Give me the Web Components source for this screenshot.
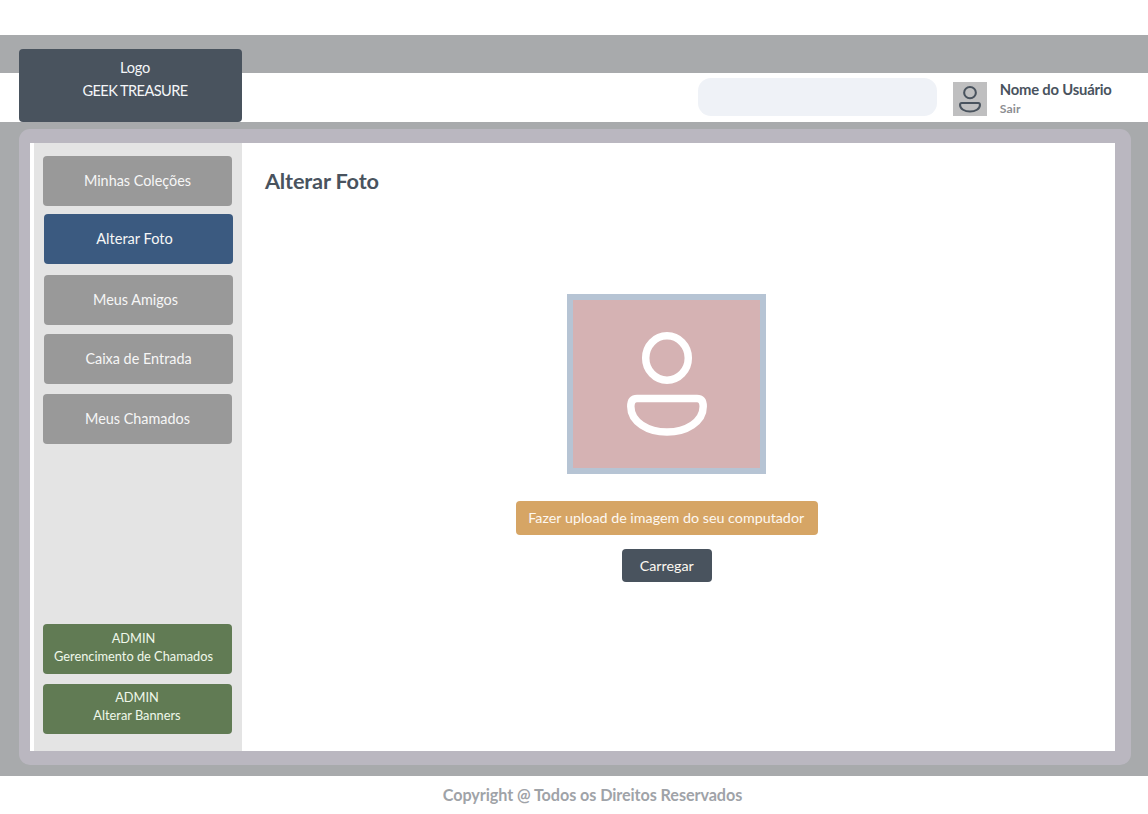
<!DOCTYPE html>
<html lang="pt-BR">
<head>
<meta charset="utf-8">
<title>Geek Treasure</title>
<style>
body { margin: 0; background: #fff; font-family: Lato, "Open Sans", sans-serif; }
</style>
</head>
<body>
<geek-page>
  <site-header slot="header">
    <site-logo slot="logo"><span slot="top">Logo</span><span slot="name">GEEK TREASURE</span></site-logo>
    <search-box slot="search"></search-box>
    <user-card slot="user"><span slot="name">Nome do Usuário</span><span slot="exit">Sair</span></user-card>
  </site-header>
  <side-nav slot="nav">
    <nav-button>Minhas Coleções</nav-button>
    <nav-button style="--bg:#3b5a80;--mt:8px;--x:1px;--shift:-4px;--fs:14.6px">Alterar Foto</nav-button>
    <nav-button style="--mt:11px;--x:1px;--shift:-3px">Meus Amigos</nav-button>
    <nav-button style="--mt:9px;--x:1px">Caixa de Entrada</nav-button>
    <nav-button style="--mt:10px">Meus Chamados</nav-button>
    <admin-button slot="admin" style="--shift:-4px">Gerencimento de Chamados</admin-button>
    <admin-button slot="admin" style="--shift:-.5px;--pt:5px">Alterar Banners</admin-button>
  </side-nav>
  <photo-panel slot="content">
    <span slot="title">Alterar Foto</span>
    <action-button slot="actions" style="--w:302px;--h:34px;--bg:#d6a565;--shift:-.5px">Fazer upload de imagem do seu computador</action-button>
    <action-button slot="actions" style="--w:90px;--h:33px;--bg:#49535e">Carregar</action-button>
  </photo-panel>
  <site-footer slot="footer">Copyright @ Todos os Direitos Reservados</site-footer>
</geek-page>
<script>
function define(name, html) {
  const t = document.createElement('template');
  t.innerHTML = html;
  customElements.define(name, class extends HTMLElement {
    constructor() {
      super();
      this.attachShadow({ mode: 'open' }).append(t.content.cloneNode(true));
    }
  });
}

define('geek-page', `<style>
:host { display: flex; flex-direction: column; height: 814px; overflow: hidden; }
main { height: 654px; box-sizing: border-box; background: #a8aaac; padding: 7px 17px 11px 19px; }
.frame { height: 636px; box-sizing: border-box; background: #bab7c0; border-radius: 11px; padding: 14px 16.5px 14px 11px; }
.sheet { height: 608px; background: #fff; display: flex; box-sizing: border-box; padding-left: 4px; }
</style>
<slot name="header"></slot>
<main><div class="frame"><div class="sheet"><slot name="nav"></slot><slot name="content"></slot></div></div></main>
<slot name="footer"></slot>`);

define('site-header', `<style>
:host { display: block; padding-top: 35px; }
.band { height: 38.4px; background: #a8aaac; }
.bar { height: 48.6px; display: flex; align-items: flex-start; padding-left: 19.3px; }
</style>
<div class="band"></div>
<div class="bar"><slot name="logo"></slot><slot name="search"></slot><slot name="user"></slot></div>`);

define('site-logo', `<style>
:host { display: block; width: 222.5px; height: 73.5px; margin-top: -24.6px; box-sizing: border-box; padding: 7px 0 0 9px; position: relative;
  background: #49535e; border-radius: 4px; color: #f4f6f8; text-align: center; font-size: 14.6px; letter-spacing: -.58px; line-height: 23px; }
.top { letter-spacing: -.2px; }
</style>
<div class="top"><slot name="top"></slot></div><div><slot name="name"></slot></div>`);

define('search-box', `<style>
:host { display: block; width: 239px; height: 38.5px; margin: 4.3px 0 0 456px; background: #eff2f7; border-radius: 13px; }
</style>`);

define('person-icon', `<style>
:host { display: block; }
svg { display: block; width: 100%; height: 100%; overflow: visible; }
</style>
<svg viewBox="0 0 80 104" preserveAspectRatio="none" fill="none" stroke="currentColor" stroke-width="7.5">
<ellipse cx="40" cy="26" rx="21.3" ry="22.2"/>
<path d="M10 66.5H70Q76.2 66.5 76.2 74.5C76.2 90 59 100 40 100S3.8 90 3.8 74.5Q3.8 66.5 10 66.5Z"/>
</svg>`);

define('user-card', `<style>
:host { display: flex; margin: 8.3px 0 0 16px; }
.avatar { width: 34.4px; height: 34.5px; background: #bfbfc0; box-sizing: border-box; padding: 4px 6px; color: #49535e; }
person-icon { width: 22px; height: 26.5px; }
.text { margin: -1px 0 0 12.6px; }
.name { font-weight: 700; font-size: 14.8px; letter-spacing: -.2px; line-height: 17px; color: #49535e; white-space: nowrap; }
.exit { font-weight: 700; font-size: 12.2px; letter-spacing: .1px; line-height: 21px; color: #8c8e92; }
</style>
<div class="avatar"><person-icon></person-icon></div>
<div class="text"><div class="name"><slot name="name"></slot></div><div class="exit"><slot name="exit"></slot></div></div>`);

define('side-nav', `<style>
:host { display: flex; flex-direction: column; justify-content: space-between; width: 208px; height: 608px; box-sizing: border-box;
  padding: 13px 0 17px 9px; background: #e4e4e4; flex: none; }
.admin { display: flex; flex-direction: column; gap: 10px; }
</style>
<nav><slot></slot></nav><div class="admin"><slot name="admin"></slot></div>`);

define('nav-button', `<style>
:host { display: flex; align-items: center; justify-content: center; width: 189px; height: 50px; box-sizing: border-box; padding-bottom: 1.5px;
  margin: var(--mt, 0) 0 0 var(--x, 0);
  background: var(--bg, #999); border-radius: 4px; color: #f6f6f6; font-size: var(--fs, 14.4px); white-space: nowrap; }
span { margin-left: calc(2 * var(--shift, 0px)); }
</style><span><slot></slot></span>`);

define('admin-button', `<style>
:host { display: block; width: 189px; height: 50px; box-sizing: border-box; padding-top: var(--pt, 6px);
  background: #617b54; border-radius: 4px; color: #eff8ea; font-size: 12.8px; line-height: 17.8px; text-align: center; white-space: nowrap; }
div { margin-left: calc(2 * var(--shift, 0px)); }
</style><div>ADMIN</div><div><slot></slot></div>`);

define('photo-panel', `<style>
:host { display: flex; flex-direction: column; align-items: center; flex: 1; padding-right: 23px; box-sizing: border-box; }
h1 { align-self: flex-start; margin: 24px 0 0 23px; font-size: 21.7px; letter-spacing: -.17px; line-height: 28px; font-weight: 700; color: #49535e; }
.photo { margin-top: 99px; width: 199px; height: 180px; box-sizing: border-box; border: 6px solid #b6c4d4; background: #d5b2b3; color: #fff; padding: 32px 0 0 53.5px; }
person-icon { width: 80px; height: 104px; }
.actions { display: flex; flex-direction: column; align-items: center; gap: 14px; margin-top: 27px; }
</style>
<h1><slot name="title"></slot></h1>
<div class="photo"><person-icon></person-icon></div>
<div class="actions"><slot name="actions"></slot></div>`);

define('action-button', `<style>
:host { display: flex; align-items: center; justify-content: center; width: var(--w); height: var(--h); background: var(--bg);
  border-radius: 4px; color: #fdf8f1; font-size: 14.3px; white-space: nowrap; }
span { margin-left: calc(2 * var(--shift, 0px)); }
</style><span><slot></slot></span>`);

define('site-footer', `<style>
:host { display: block; height: 38px; padding-left: 37px; text-align: center; font-weight: 700; font-size: 16.2px; letter-spacing: -.08px; line-height: 38px; color: #9fa3a8; }
</style><slot></slot>`);
</script>
</body>
</html>
